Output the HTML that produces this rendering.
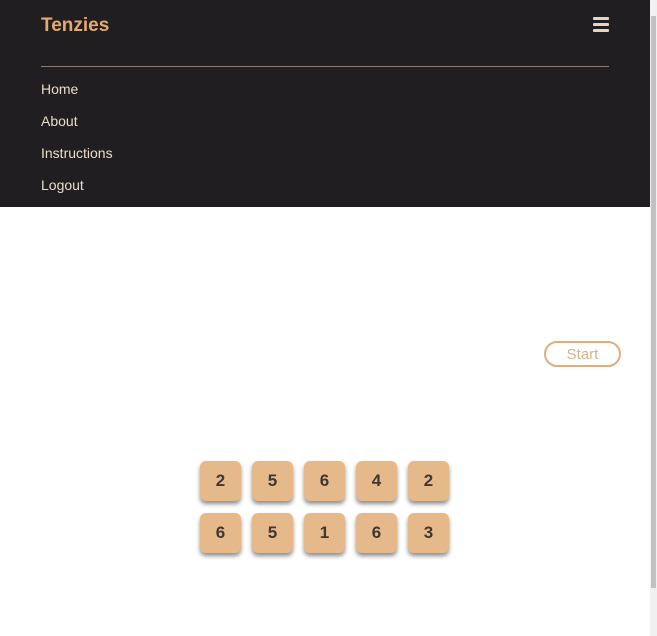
<!DOCTYPE html>
<html><head><style>
body{margin:0;width:657px;height:636px;overflow:hidden;background:#fff;font-family:"Liberation Sans",sans-serif;position:relative}
.hdr{position:absolute;left:0;top:0;width:650px;height:207px;background:#201e21}
.logo{position:absolute;left:41px;top:15px;color:#e4a96c;font-weight:bold;font-size:19px}
.burg{position:absolute;left:593px;top:17px;width:16px}
.burg i{display:block;height:3px;background:#e8d5bf;margin-bottom:3px;border-radius:1px}
.line{position:absolute;left:41px;top:66px;width:568px;height:1px;background:#8a7e72}
.nav{position:absolute;left:41px;color:#eadccb;font-size:14px}
.sb{position:absolute;left:650px;top:0;width:7px;height:636px;background:#f1f1f1}
.sb i{position:absolute;left:1px;top:16px;width:5px;height:572px;background:#c1c1c1}
.start{position:absolute;left:544px;top:341px;width:73px;height:22px;border:2px solid #dfae7a;border-radius:14px;color:#d9b48a;font-size:15px;text-align:center;line-height:23px}
.d{position:absolute;width:41px;height:40px;background:#e6b98b;border-radius:6px;box-shadow:0 3px 4px rgba(0,0,0,.45);color:#3d3833;font-weight:bold;font-size:17px;text-align:center;line-height:40px}
</style></head><body>
<div class="hdr">
<div class="logo">Tenzies</div>
<div class="burg"><i></i><i></i><i></i></div>
<div class="line"></div>
<div class="nav" style="top:81px">Home</div>
<div class="nav" style="top:113px">About</div>
<div class="nav" style="top:145px">Instructions</div>
<div class="nav" style="top:177px">Logout</div>
</div>
<div class="sb"><i></i></div>
<div class="start">Start</div>
<div class="d" style="left:200px;top:461px">2</div>
<div class="d" style="left:252px;top:461px">5</div>
<div class="d" style="left:304px;top:461px">6</div>
<div class="d" style="left:356px;top:461px">4</div>
<div class="d" style="left:408px;top:461px">2</div>
<div class="d" style="left:200px;top:513px">6</div>
<div class="d" style="left:252px;top:513px">5</div>
<div class="d" style="left:304px;top:513px">1</div>
<div class="d" style="left:356px;top:513px">6</div>
<div class="d" style="left:408px;top:513px">3</div>
</body></html>
